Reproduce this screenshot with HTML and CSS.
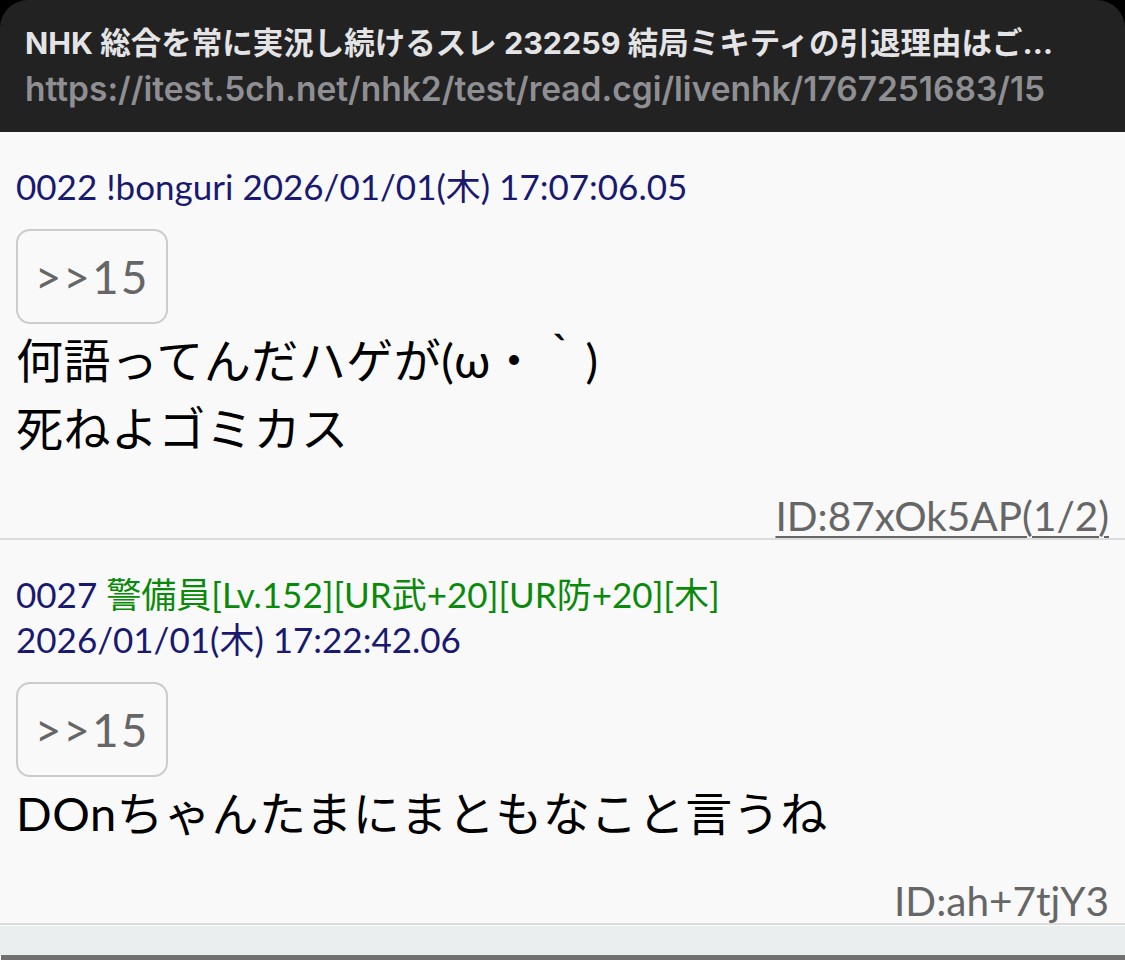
FILE: index.html
```html
<!DOCTYPE html>
<html lang="ja">
<head>
<meta charset="utf-8">
<title>5ch</title>
<link rel="stylesheet" href="styles.css">
</head>
<body>
<div class="screen">
  <header class="topbar">
    <div class="title">NHK 総合を常に実況し続けるスレ 232259 結局ミキティの引退理由はご…</div>
    <div class="url">https://itest.5ch.net/nhk2/test/read.cgi/livenhk/1767251683/15</div>
  </header>
  <main class="thread">
    <article class="post">
      <div class="meta"><span class="num">0022</span> <span class="name-plain">!bonguri</span> <span class="date">2026/01/01(木) 17:07:06.05</span></div>
      <div class="anchor">&gt;&gt;15</div>
      <div class="body">何語ってんだハゲが(ω・｀)<br>死ねよゴミカス</div>
      <div class="id"><span class="idlink">ID:87xOk5AP(1/2)</span></div>
    </article>
    <article class="post">
      <div class="meta"><span class="num">0027</span> <span class="name-green">警備員[Lv.152][UR武+20][UR防+20][木]</span></div>
      <div class="meta"><span class="date">2026/01/01(木) 17:22:42.06</span></div>
      <div class="anchor">&gt;&gt;15</div>
      <div class="body">DOnちゃんたまにまともなこと言うね</div>
      <div class="id"><span>ID:ah+7tjY3</span></div>
    </article>
    <div class="footer-band"></div>
    <div class="footer-bar"></div>
  </main>
</div>
</body>
</html>
```

FILE: styles.css
```css
* { box-sizing: border-box; }
html, body {
  margin: 0;
  padding: 0;
  background: #000;
}
.screen {
  width: 1125px;
  height: 960px;
  overflow: hidden;
  display: flex;
  flex-direction: column;
  background: #000;
}
.topbar {
  background: #222222;
  border-radius: 28px 28px 0 0;
  height: 132px;
  padding: 21px 25px 0 25px;
  font-family: Inter, "Noto Sans CJK JP", sans-serif;
  flex: none;
}
.title {
  color: #e4e4e6;
  font-weight: 700;
  font-size: 30.5px;
  line-height: 44px;
  white-space: nowrap;
  overflow: hidden;
}
.url {
  color: #8f8f93;
  font-weight: 600;
  font-size: 33.5px;
  line-height: 48px;
  white-space: nowrap;
  overflow: hidden;
}
.thread {
  flex: 1;
  background: #f9f9f9;
  display: flex;
  flex-direction: column;
  font-family: Lato, "Noto Sans CJK JP", sans-serif;
}
.post {
  padding: 32px 16px 0 16px;
  border-bottom: 2px solid #dcdcdc;
}
.meta {
  font-size: 35px;
  line-height: 45px;
  color: #191970;
  white-space: nowrap;
}
.name-green { color: #0a8a0a; }
.anchor {
  margin-top: 20px;
  width: 152px;
  height: 95px;
  border: 2px solid #cccccc;
  border-radius: 14px;
  display: flex;
  align-items: center;
  justify-content: center;
  color: #666;
  font-size: 46px;
  letter-spacing: 2px;
}
.body {
  color: #000;
  font-size: 47px;
  letter-spacing: 0.5px;
  line-height: 68px;
  margin-top: 2px;
}
.id {
  margin-top: 32px;
  text-align: right;
  font-size: 40.5px;
  line-height: 44px;
  color: #666;
}
.idlink { text-decoration: underline; text-decoration-thickness: 2px; text-underline-offset: 5px; }
.footer-band {
  margin-top: 1px;
  height: 29px;
  background: #eaeeee;
}
.footer-bar {
  height: 5px;
  background: #707070;
  margin-left: 1px;
}
```
